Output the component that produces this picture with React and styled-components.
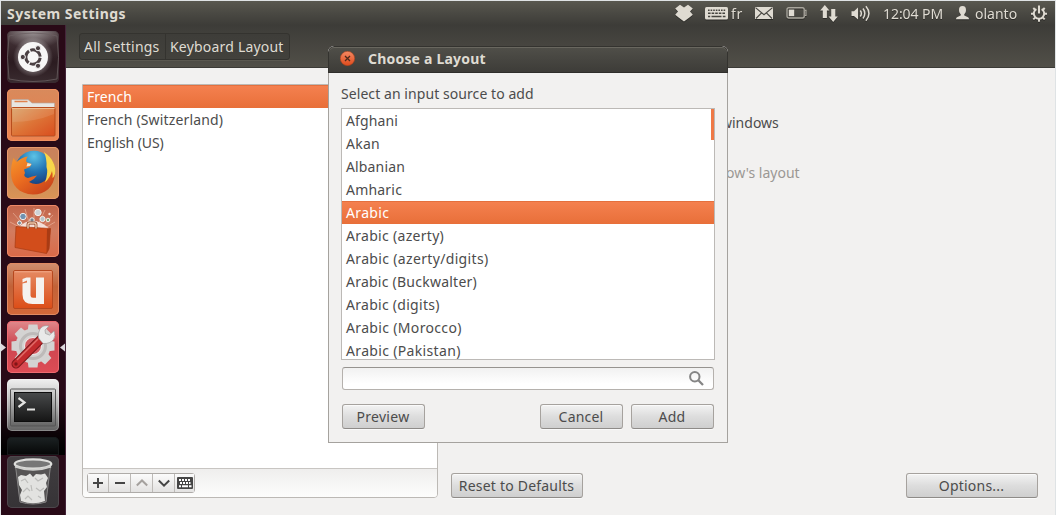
import React from 'react';
import styled, { createGlobalStyle, css } from 'styled-components';

const Global = createGlobalStyle`
  * { box-sizing: border-box; }
  html, body { margin: 0; padding: 0; background: #fff; overflow: hidden; }
  body { font-family: "Noto Sans", "Open Sans", sans-serif; font-size: 14px; color: #4c4c4c; }
  svg { display: block; }
`;

const Desktop = styled.div`
  position: relative;
  width: 1056px;
  height: 515px;
  display: flex;
  flex-direction: column;
  overflow: hidden;
  border: 1px solid #dfe3e5;
  border-bottom: 0;
  background: #f2f1f0;
`;

const MenuBar = styled.header`
  flex: none;
  height: 24px;
  padding: 0 8px 0 6px;
  display: flex;
  justify-content: space-between;
  align-items: center;
  background: linear-gradient(#595850, #4a4943 50%, #3d3c38);
  color: #dfdbd2;
`;

const Text = styled.span`
  display: block;
  white-space: nowrap;
  letter-spacing: ${(p) => p.$track || 0}px;
`;

const AppName = styled(Text)`
  font-weight: 700;
  font-size: 14px;
`;

const Indicators = styled.div`
  display: flex;
  align-items: center;
  height: 24px;
`;

const Indicator = styled.div`
  flex: none;
  width: ${(p) => p.$w}px;
  margin-left: ${(p) => p.$gap}px;
  filter: drop-shadow(0 1px 0 rgba(0, 0, 0, 0.35));
`;

const Workspace = styled.div`
  flex: 1;
  min-height: 0;
  display: flex;
`;

const Launcher = styled.nav`
  flex: none;
  width: 65px;
  padding: 6px 0 0 6px;
  display: flex;
  flex-direction: column;
  gap: 6px;
  border-right: 1px solid #45253a;
  background:
    linear-gradient(rgba(0, 0, 0, 0) 370px, #000 425px, #000 430px, rgba(0, 0, 0, 0) 430px),
    #290a17;
`;

const Tile = styled.div`
  flex: none;
  width: 52px;
  height: ${(p) => p.$h || 52}px;
  margin-top: ${(p) => p.$pull || 0}px;
  border-radius: ${(p) => (p.$cut ? '5px 5px 0 0' : '5px')};
  overflow: hidden;
  background: ${(p) => p.$bg};
  box-shadow: inset 0 0 0 1px ${(p) => p.$edge};
`;

const Running = styled.div`
  display: flex;
  align-items: center;
  justify-content: space-between;
  width: 64px;
  margin-left: -6px;
  flex: none;
`;

const Content = styled.main`
  flex: 1;
  min-width: 0;
  display: flex;
  flex-direction: column;
`;

const Toolbar = styled.div`
  flex: none;
  height: 43px;
  padding: 8px 13px;
  border-bottom: 1px solid #3b3a36;
  background: linear-gradient(#3d3c38, #514f48);
`;

const Crumbs = styled.div`
  display: inline-flex;
  height: 27px;
  border: 1px solid #34332f;
  border-radius: 3px;
  background: linear-gradient(#3e3d39, #42413c);
  box-shadow: 0 1px 0 #5a5850;
  color: #dfdbd2;
`;

const Crumb = styled.div`
  display: flex;
  align-items: center;
  padding-left: 4px;
  width: ${(p) => p.$w}px;
  & + & { border-left: 1px solid #34332f; }
`;

const Panel = styled.div`
  flex: 1;
  display: flex;
  padding: 16px 17px 18px 16px;
`;

const Sources = styled.section`
  width: 356px;
  height: 414px;
  display: flex;
  flex-direction: column;
  border: 1px solid #bcb9b5;
  border-radius: 0 0 4px 4px;
  overflow: hidden;
`;

const List = styled.div`
  flex: 1;
  min-height: 0;
  overflow: hidden;
  background: #fff;
`;

const Row = styled.div`
  height: 23px;
  padding-left: 4px;
  display: flex;
  align-items: center;
  ${(p) => p.$on && css`
    color: #fff;
    background: linear-gradient(#f58150, #e86f39);
    box-shadow: inset 0 1px 0 #e4703e;
  `}
`;

const ListTools = styled.div`
  height: 29px;
  padding: 4px 4px;
  border-top: 1px solid #c8c5c2;
  background: linear-gradient(#efeeed, #fdfdfc);
`;

const ToolGroup = styled.div`
  display: inline-flex;
  height: 20px;
  border: 1px solid #aeaba8;
  border-radius: 3px;
`;

const Tool = styled.button`
  width: 22px;
  height: 18px;
  padding: 0;
  border: 0;
  display: flex;
  align-items: center;
  justify-content: center;
  color: ${(p) => (p.disabled ? '#a5a19e' : '#454545')};
  background: linear-gradient(#fbfbfb, #e3e2e1);
  & + & { border-left: 1px solid #bdbab7; }
  &:first-child, &:last-child { width: 20px; }
`;

const Side = styled.section`
  flex: 1;
  margin-left: 13px;
  display: flex;
  flex-direction: column;
  justify-content: space-between;
`;

const Choices = styled.div`
  padding: 29px 0 0 270px;
  line-height: 20px;
  display: flex;
  flex-direction: column;
  gap: 30px;
`;

const Muted = styled(Text)`
  padding-left: 5px;
  color: #9b9894;
`;

const Actions = styled.div`
  display: flex;
  justify-content: space-between;
`;

const Button = styled.button`
  flex: none;
  width: ${(p) => p.$w}px;
  height: 25px;
  padding: 0 1px 1px 0;
  display: flex;
  align-items: center;
  justify-content: center;
  font: inherit;
  color: #4c4c4c;
  border: 1px solid #a6a29e;
  border-bottom-color: #8e8b88;
  border-radius: 3px;
  background: linear-gradient(#f3f3f3, #dddddd 50%, #cfcfcf);
  box-shadow: inset 0 1px 0 #fafafa, 0 1px 0 #fafafa;
`;

const Dialog = styled.div`
  position: absolute;
  left: 327px;
  top: 45px;
  width: 400px;
  height: 397px;
  display: flex;
  flex-direction: column;
  border-radius: 6px 6px 0 0;
  overflow: hidden;
  background: #f2f1f0;
`;

const TitleBar = styled.div`
  height: 27px;
  flex: none;
  padding: 0 0 2px 11px;
  display: flex;
  align-items: center;
  gap: 13px;
  border: 1px solid #34332f;
  border-bottom-color: #2f2e2b;
  border-radius: 6px 6px 0 0;
  background: linear-gradient(#504f49, #3d3c38);
  box-shadow: inset 0 1px 0 #69675f;
  color: #dfdbd2;
  font-weight: 700;
`;

const Body = styled.div`
  flex: 1;
  min-height: 0;
  padding: 11px 12px 12px;
  border: 1px solid #a5a29e;
  border-top: 0;
`;

const Prompt = styled(Text)`
  line-height: 20px;
`;

const Picker = styled.div`
  height: 252px;
  margin-top: 4px;
  width: 374px;
  display: flex;
  border: 1px solid #bcb9b6;
  background: #fff;
  overflow: hidden;
`;

const Thumb = styled.div`
  width: 3px;
  height: 31px;
  margin-left: -3px;
  background: #ef7947;
`;

const Search = styled.div`
  margin: 7px 0 0 1px;
  width: 372px;
  height: 23px;
  padding: 0 9px 1px 0;
  display: flex;
  align-items: center;
  justify-content: flex-end;
  border: 1px solid #b5b1ad;
  border-top-color: #96938f;
  border-radius: 3px;
  background: linear-gradient(#f1f1f1, #fff 75%);
`;

const DialogActions = styled.div`
  margin: 14px 0 0 1px;
  width: 372px;
  display: flex;
  gap: 8px;
`;

const Spacer = styled.div`
  flex: 1;
`;

const C = '#dfdbd2';

const DropboxIcon = () => (
  <svg width="18" height="18" viewBox="0 0 18 18" fill={C}>
    <path d="M5 .8 9 3.4 13 .8 17.8 4.4 15 7.6 17.8 10.8 14.4 13.6 9 17.6 3.6 13.6 .2 10.8 3 7.6 .2 4.4Z" />
  </svg>
);

const KeyboardIcon = () => (
  <svg width="23" height="13" viewBox="0 0 23 13">
    <rect width="23" height="12.5" rx="1.5" fill={C} />
    <g stroke="#45443f" strokeWidth="1.4">
      <path d="M3 3.2H20.5" strokeDasharray="1.6 1" />
      <path d="M3 6.2H20.5" strokeDasharray="2.6 1" />
      <path d="M3 9.5H5.2M6.5 9.5H16.5M17.8 9.5H20.5" />
    </g>
  </svg>
);

const MailIcon = () => (
  <svg width="18" height="12" viewBox="0 0 18 12">
    <rect width="18" height="12" fill={C} />
    <path d="M.5 .7 9 7.7 17.5 .7M1 11.5 6.6 5.8M17 11.5 11.4 5.8" fill="none" stroke="#45443f" strokeWidth="1.1" />
  </svg>
);

const BatteryIcon = () => (
  <svg width="22" height="12" viewBox="0 0 22 12">
    <rect x="1" y=".8" width="17.2" height="10.2" rx="1.8" fill="none" stroke="#a9a69d" strokeWidth="1.4" />
    <path d="M18.8 3.3H20V8.5H18.8" fill="none" stroke="#a9a69d" strokeWidth="1.2" />
    <rect x="2.8" y="2.6" width="5.4" height="6.6" fill={C} />
  </svg>
);

const NetworkIcon = () => (
  <svg width="18" height="17" viewBox="0 0 18 17" fill={C}>
    <path d="M4.8 0 9.4 5.4H6.9V13H2.8V5.4H.2Z" />
    <path d="M13.2 17 17.8 11.6H15.3V4H11.2V11.6H8.6Z" />
  </svg>
);

const SoundIcon = () => (
  <svg width="20" height="17" viewBox="0 0 20 17">
    <path d="M.5 6.2H3L7 2.6V14.4L3 11H.5Z" fill={C} />
    <path d="M9.3 5.5Q11.4 8.5 9.3 11.5M12 3.5Q15.6 8.5 12 13.5M14.9 1.2Q21 8.5 14.9 15.8" fill="none" stroke={C} strokeWidth="1.5" />
  </svg>
);

const UserIcon = () => (
  <svg width="13" height="14" viewBox="0 0 13 14" fill={C}>
    <path d="M6.5 0C9 0 10 1.6 10 4 10 6.2 9.1 7.4 8.3 8.3V9.5L12 11.2Q13 11.8 13 13.2H0Q0 11.8 1 11.2L4.7 9.5V8.3C3.9 7.4 3 6.2 3 4 3 1.6 4 0 6.5 0Z" />
  </svg>
);

const PowerIcon = () => (
  <svg width="16" height="17" viewBox="0 0 16 17" fill="none" stroke={C}>
    <path d="M5.4 4.1A5.2 5.2 0 1 0 10.6 4.1" strokeWidth="2" />
    <path d="M8 .5V8.5" strokeWidth="2" />
    <path d="M0 8.7H2.5M13.5 8.7H16M8 14V16.8M2.3 3 4 4.7M13.7 3 12 4.7M2.3 14.4 4.1 12.6M13.7 14.4 11.9 12.6" strokeWidth="2" />
  </svg>
);

const DashIcon = () => (
  <svg width="52" height="52" viewBox="0 0 52 52">
    <defs>
      <radialGradient id="dashGlow">
        <stop offset=".5" stopColor="#fff" stopOpacity=".45" />
        <stop offset="1" stopColor="#fff" stopOpacity="0" />
      </radialGradient>
      <radialGradient id="dashTop" cx=".5" cy="0" r=".6">
        <stop offset="0" stopColor="#9d9697" />
        <stop offset="1" stopColor="#9d9697" stopOpacity="0" />
      </radialGradient>
    </defs>
    <rect width="52" height="30" fill="url(#dashTop)" />
    <path d="M2 5Q26-1 50 5Q53 26 50 48Q26 53 2 48Q-1 26 2 5Z" fill="none" stroke="#6b5f62" strokeWidth=".8" />
    <circle cx="26" cy="26" r="20" fill="url(#dashGlow)" />
    <circle cx="26" cy="26" r="15" fill="#f7f6f6" />
    <circle cx="26" cy="26" r="7.2" fill="none" stroke="#4b4043" strokeWidth="3" strokeDasharray="13.6 1.5" strokeDashoffset="-.8" />
    <g fill="#4b4043" stroke="#f7f6f6" strokeWidth="1">
      <circle cx="15.8" cy="26" r="2.6" />
      <circle cx="31" cy="17.2" r="2.6" />
      <circle cx="31" cy="34.8" r="2.6" />
    </g>
  </svg>
);

const FilesIcon = () => (
  <svg width="52" height="52" viewBox="0 0 52 52">
    <defs>
      <linearGradient id="folder" x1="0" y1="0" x2="1" y2="1">
        <stop offset="0" stopColor="#d9a268" />
        <stop offset=".5" stopColor="#dd7437" />
        <stop offset="1" stopColor="#d94d1e" />
      </linearGradient>
    </defs>
    <path d="M4.5 47V11.5Q4.5 10.5 5.5 10.5H21L25 14H47.5V47Z" fill="#e8e6e2" stroke="#b9a59a" strokeWidth=".7" />
    <path d="M7.5 12.5H20.5" stroke="#e0824d" strokeWidth="1.5" />
    <rect x="4.5" y="18.5" width="43.5" height="28.5" rx="1" fill="url(#folder)" stroke="#b94d1d" />
    <path d="M5 19.5H47.5" stroke="#efbd90" />
    <path d="M5.5 33Q28 33 47 25V20H5.5Z" fill="#fff" opacity=".1" />
  </svg>
);

const FirefoxIcon = () => (
  <svg width="52" height="52" viewBox="0 0 52 52">
    <defs>
      <radialGradient id="globe" cx=".5" cy=".15" r=".8">
        <stop offset="0" stopColor="#5cc3e6" />
        <stop offset=".5" stopColor="#2275b5" />
        <stop offset="1" stopColor="#183a78" />
      </radialGradient>
      <linearGradient id="fox" x1="0" y1="0" x2=".8" y2="1">
        <stop offset="0" stopColor="#f79a2c" />
        <stop offset=".5" stopColor="#ea6c20" />
        <stop offset="1" stopColor="#c7401b" />
      </linearGradient>
    </defs>
    <circle cx="27" cy="22.5" r="18.8" fill="url(#globe)" />
    <path d="M38 8C46 12 49 19 48 27 47 40 38 47.5 26 47.5 12 47 4 38 4 26 4 20 5 15 6.5 11L9.5 15Q15 10 21 9.5 18.5 12 19.5 15L24.5 17 23 20 17 22.5 18 26Q15.5 29.5 21 31 25 29 30 28.5 27 33 22 35 28 38.5 34 36 42 33 42.5 23 42.5 14 38 8Z" fill="url(#fox)" />
    <path d="M37 5C46 11 49.5 20 48 27Q47 30 45.5 31 46 27 45 24 43 31 38 35.5 41.5 25 39.5 20 40 12 37 5Z" fill="#f7d64a" />
    <path d="M20.5 16 24.5 17 23 19 19.5 19.5Z" fill="#f5e3c8" />
  </svg>
);

const SoftwareIcon = () => (
  <svg width="52" height="52" viewBox="0 0 52 52">
    <g stroke="#f6c9b3" strokeWidth="1">
      <path d="M22 26 6 8M24 24 18 4M27 24V3M29 24 38 5M31 26 46 10M20 26 3 17M33 26 48 17" opacity=".5" />
    </g>
    <path d="M11 23Q25 8 43 24Z" fill="#fff" opacity=".75" />
    <circle cx="16" cy="11.5" r="3.2" fill="#6f91b0" stroke="#eee" />
    <circle cx="31" cy="7.5" r="3.2" fill="#cdd3d6" stroke="#f5efea" />
    <circle cx="35.5" cy="14" r="2.6" fill="#b6c4ca" stroke="#f5efea" />
    <circle cx="25" cy="15" r="2.2" fill="#76828c" stroke="#f5efea" />
    <circle cx="41" cy="15" r="1.8" fill="#87a878" stroke="#f5efea" />
    <circle cx="12.5" cy="18" r="2" fill="#7b8994" stroke="#f5efea" />
    <circle cx="42.5" cy="9" r="1.2" fill="#f8dfd3" />
    <path d="M9 21.5 43.5 23.5 42 44 39.5 48.5 8 42.5Z" fill="#d24d1b" stroke="#a83c15" strokeWidth=".7" />
    <path d="M43.5 23.5 42 44 39.5 48.5 40 24Z" fill="#a93b14" />
    <path d="M21 23.5V19.5Q21 18 22.5 18H27.5Q29 18 29 19.5V23.5" fill="none" stroke="#8a3614" strokeWidth="2.8" />
    <path d="M21 23.5V19.5Q21 18 22.5 18H27.5Q29 18 29 19.5V23.5" fill="none" stroke="#f3d1b4" strokeWidth="1.4" />
  </svg>
);

const CloudIcon = () => (
  <svg width="52" height="52" viewBox="0 0 52 52">
    <defs>
      <linearGradient id="plate" x1="0" y1="0" x2="0" y2="1">
        <stop offset="0" stopColor="#e58a63" />
        <stop offset="1" stopColor="#dc4d17" />
      </linearGradient>
    </defs>
    <rect x="6.5" y="7.5" width="39" height="38" rx="1.5" fill="url(#plate)" stroke="#b6481f" />
    <path d="M7.5 8.8H44.5" stroke="#f2a988" />
    <path d="M15.5 19.5V16L19.5 14.5H23.5V32.5Q23.5 34.8 26 34.8H29V14.5H37V41H25.5Q15.5 41 15.5 31.5V20.5L20 19.5V17.5Z" fill="#f5f1ee" />
  </svg>
);

const SettingsIcon = () => (
  <svg width="52" height="52" viewBox="0 0 52 52">
    <g fill="#d4d3d2">
      {[0, 45, 90, 135].map((a) => (
        <path key={a} d="M21.5 3.5H30.5L31.5 12V38L30.5 46.5H21.5L20.5 38V12Z" transform={`rotate(${a} 26 25)`} />
      ))}
      <circle cx="26" cy="25" r="17.5" />
    </g>
    <circle cx="26" cy="25" r="12.5" fill="none" stroke="#bdbab9" strokeWidth="3" />
    <circle cx="26" cy="25" r="8.5" fill="#d45a61" stroke="#eee" />
    <path d="M9 43 34.5 17.5" stroke="#7b1518" strokeWidth="9" strokeLinecap="round" />
    <path d="M9 43 34.5 17.5" stroke="#c22a2d" strokeWidth="7" strokeLinecap="round" />
    <path d="M10 39 31 18" stroke="#e06c69" strokeWidth="1.4" />
    <path d="M31.5 17 36 22.5Q43 23 46.5 18.5 49 15 47 10L42.5 14 38.5 12.5 38 9 42 5Q36 3.5 33 8 30.5 12 31.5 17Z" fill="#e9e9e9" stroke="#a09d9d" strokeWidth=".7" />
    <circle cx="9" cy="43" r="1.7" fill="#811517" />
  </svg>
);

const TerminalIcon = () => (
  <svg width="52" height="52" viewBox="0 0 52 52">
    <defs>
      <linearGradient id="screen" x1="0" y1="0" x2="0" y2="1">
        <stop offset="0" stopColor="#484a4b" />
        <stop offset="1" stopColor="#151515" />
      </linearGradient>
      <linearGradient id="bezel" x1="0" y1="0" x2="0" y2="1">
        <stop offset="0" stopColor="#d5d5d5" />
        <stop offset="1" stopColor="#656565" />
      </linearGradient>
    </defs>
    <rect x="3.5" y="10" width="45" height="37" rx="1" fill="url(#bezel)" stroke="#555" />
    <rect x="7.5" y="13.5" width="37" height="29" fill="url(#screen)" stroke="#0d0d0d" />
    <path d="M11.5 19 17.5 23.5 11.5 28" fill="none" stroke="#e4e4e2" strokeWidth="2.2" />
    <path d="M20 30.5H28" stroke="#e4e4e2" strokeWidth="2" />
  </svg>
);

const TrashIcon = () => (
  <svg width="52" height="52" viewBox="0 0 52 52">
    <path d="M8.5 10 13 46Q26 50 39 46L43.5 10Z" fill="#5d5c5c" opacity=".8" stroke="#9c9b9b" />
    <path d="M11 21 14 19 19 20 23 17.5 26 21 29 18 34 18.5 38 17.5 41 22 39 27 40 31 37 35 38 45Q26 49.5 14 45L13 39 15 34 12 29Z" fill="#e2e2e0" />
    <path d="M14 25 18 23 21 27M28 22 31 25 36 22M16 36 20 32 23 35M29 32 33 35 37 32M18 43 21 40 25 44M31 40 34 42M25 35 24 29" fill="none" stroke="#bcbcba" strokeWidth="1.2" />
    <ellipse cx="26" cy="8" rx="18.3" ry="4.6" fill="#777" stroke="#dededc" strokeWidth="2.2" />
    <path d="M8 10.5Q26 17 44 10.5" fill="none" stroke="#d0d0ce" strokeWidth="2" />
  </svg>
);

const Pip = ({ flip }) => (
  <svg width="5" height="9" viewBox="0 0 5 9">
    <path d={flip ? 'M5 .5 0 4.5 5 8.5Z' : 'M0 .5 5 4.5 0 8.5Z'} fill="#dcd8dc" />
  </svg>
);

const SmallKeyboard = () => (
  <svg width="16" height="12" viewBox="0 0 16 12">
    <rect width="16" height="12" rx="1" fill="#454545" />
    <g stroke="#fff" strokeWidth="2">
      <path d="M2 3H14" strokeDasharray="2 1" />
      <path d="M3 6H13.5" strokeDasharray="2 1" />
      <path d="M2 9.2H4M5 9.2H11M12 9.2H14.5" />
    </g>
  </svg>
);

const Glyph = ({ d }) => (
  <svg width="12" height="12" viewBox="0 0 12 12" fill="none" stroke="currentColor" strokeWidth="2">
    <path d={d} />
  </svg>
);

const SearchIcon = () => (
  <svg width="15" height="15" viewBox="0 0 15 15" fill="none" stroke="#858585">
    <circle cx="5.8" cy="5.8" r="4.7" strokeWidth="2" />
    <path d="M9.3 9.3 14 14" strokeWidth="2.3" />
  </svg>
);

const CloseIcon = () => (
  <svg width="15" height="15" viewBox="0 0 15 15">
    <defs>
      <linearGradient id="close" x1="0" y1="0" x2="0" y2="1">
        <stop offset="0" stopColor="#f58a63" />
        <stop offset="1" stopColor="#de4a1c" />
      </linearGradient>
    </defs>
    <circle cx="7.5" cy="7.5" r="7.2" fill="url(#close)" stroke="#a8431f" strokeWidth=".6" />
    <path d="M5 5 10 10M10 5 5 10" stroke="#4e2a1c" strokeWidth="1.3" />
  </svg>
);

const sources = [['French', 0.05], ['French (Switzerland)', 0.15], ['English (US)', -0.07]];
const layouts = [
  ['Afghani', 0.12], ['Akan', 0.25], ['Albanian', 0.15], ['Amharic', 0.2], ['Arabic', 0.35],
  ['Arabic (azerty)', 0.3], ['Arabic (azerty/digits)', 0.34], ['Arabic (Buckwalter)', 0.24],
  ['Arabic (digits)', 0.28], ['Arabic (Morocco)', 0.34], ['Arabic (Pakistan)', 0.34],
];

export default function App() {
  return (
    <>
      <Global />
      <Desktop>
        <MenuBar>
          <AppName $track={0.48}>System Settings</AppName>
          <Indicators>
            <Indicator $w={18} $gap={0}><DropboxIcon /></Indicator>
            <Indicator $w={23} $gap={12}><KeyboardIcon /></Indicator>
            <Indicator $w={12} $gap={3}><Text $track={0.8}>fr</Text></Indicator>
            <Indicator $w={18} $gap={12}><MailIcon /></Indicator>
            <Indicator $w={22} $gap={13}><BatteryIcon /></Indicator>
            <Indicator $w={18} $gap={12}><NetworkIcon /></Indicator>
            <Indicator $w={20} $gap={13}><SoundIcon /></Indicator>
            <Indicator $w={61} $gap={12}><Text $track={-0.05}>12:04 PM</Text></Indicator>
            <Indicator $w={13} $gap={12}><UserIcon /></Indicator>
            <Indicator $w={43} $gap={6}><Text>olanto</Text></Indicator>
            <Indicator $w={16} $gap={13}><PowerIcon /></Indicator>
          </Indicators>
        </MenuBar>
        <Workspace>
          <Launcher>
            <Tile $bg="linear-gradient(#4a3a3e, #2b1b20 60%, #3a2c30)" $edge="#3a2a30"><DashIcon /></Tile>
            <Tile $bg="linear-gradient(#d88a5c, #e28352 50%, #ee8450)" $edge="#f09060"><FilesIcon /></Tile>
            <Tile $bg="linear-gradient(#c9805c, #c98a58 50%, #d99456)" $edge="#e89a6c"><FirefoxIcon /></Tile>
            <Tile $bg="linear-gradient(#c0644a, #d27c60 50%, #da6a48)" $edge="#ee8a68"><SoftwareIcon /></Tile>
            <Tile $bg="linear-gradient(#d09070, #c26238 45%, #d4693a)" $edge="#e08a62"><CloudIcon /></Tile>
            <Running>
              <Pip />
              <Tile $bg="linear-gradient(#e08a8c, #cc4650 45%, #de4c55)" $edge="#ee6a70"><SettingsIcon /></Tile>
              <Pip flip />
            </Running>
            <Tile $bg="linear-gradient(#f0f0f0, #b5b5b5 50%, #616161)" $edge="rgba(255,255,255,.25)"><TerminalIcon /></Tile>
            <Tile $h={18} $cut $bg="linear-gradient(#1c2223, #050606)" $edge="#161a1b" />
            <Tile $pull={-5} $bg="linear-gradient(#413e41, #363336)" $edge="#4d474c"><TrashIcon /></Tile>
          </Launcher>
          <Content>
            <Toolbar>
              <Crumbs>
                <Crumb $w={85}><Text $track={0.2}>All Settings</Text></Crumb>
                <Crumb $w={124}><Text $track={0.2}>Keyboard Layout</Text></Crumb>
              </Crumbs>
            </Toolbar>
            <Panel>
              <Sources>
                <List>
                  {sources.map(([name, t], i) => (
                    <Row key={name} $on={i === 0}><Text $track={t}>{name}</Text></Row>
                  ))}
                </List>
                <ListTools>
                  <ToolGroup>
                    <Tool><Glyph d="M1 6H11M6 1V11" /></Tool>
                    <Tool><Glyph d="M1 6H11" /></Tool>
                    <Tool disabled><Glyph d="M.8 8.5 6 3.5 11.2 8.5" /></Tool>
                    <Tool><Glyph d="M.8 3.5 6 8.7 11.2 3.5" /></Tool>
                    <Tool><SmallKeyboard /></Tool>
                  </ToolGroup>
                </ListTools>
              </Sources>
              <Side>
                <Choices>
                  <Text>windows</Text>
                  <Muted>ow's layout</Muted>
                </Choices>
                <Actions>
                  <Button $w={132}><Text $track={0.2}>Reset to Defaults</Text></Button>
                  <Button $w={132}><Text $track={0.2}>Options...</Text></Button>
                </Actions>
              </Side>
            </Panel>
          </Content>
        </Workspace>
        <Dialog>
          <TitleBar>
            <CloseIcon />
            <Text $track={0.2}>Choose a Layout</Text>
          </TitleBar>
          <Body>
            <Prompt $track={0.07}>Select an input source to add</Prompt>
            <Picker>
              <List>
                {layouts.map(([name, t]) => (
                  <Row key={name} $on={name === 'Arabic'}><Text $track={t}>{name}</Text></Row>
                ))}
              </List>
              <Thumb />
            </Picker>
            <Search><SearchIcon /></Search>
            <DialogActions>
              <Button $w={83}><Text $track={0.3}>Preview</Text></Button>
              <Spacer />
              <Button $w={83}><Text $track={0.2}>Cancel</Text></Button>
              <Button $w={83}><Text $track={0.3}>Add</Text></Button>
            </DialogActions>
          </Body>
        </Dialog>
      </Desktop>
    </>
  );
}
